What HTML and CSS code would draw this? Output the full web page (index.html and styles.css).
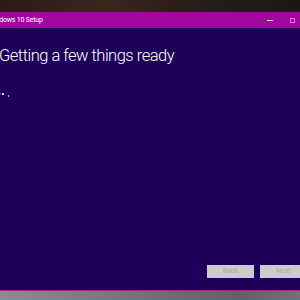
FILE: index.html
```html
<!DOCTYPE html>
<html lang="en">
<head>
	<meta charset="UTF-8">
	<title>Windows 10 Setup</title>
	<link rel="stylesheet" href="styles.css">
</head>
<body>
	<div class="desktop">
		<div class="wallpaper-top"></div>

		<div class="window">
			<div class="titlebar">
				<span class="title">Windows 10 Setup</span>
				<div class="controls">
					<span class="ctrl"><i class="ctrl-min"></i></span>
					<span class="ctrl"><i class="ctrl-max"></i></span>
					<span class="ctrl"><i class="ctrl-close">&#x2715;</i></span>
				</div>
			</div>

			<div class="content">
				<h1 class="heading">Getting a few things ready</h1>
				<svg class="progress-dots" width="12" height="5" viewBox="0 0 12 5">
					<rect x="0" y="0" width="1" height="1" fill="#7a6ab0"/>
					<rect x="2" y="0" width="2" height="2" fill="#d8d0f0"/>
					<rect x="8" y="2" width="1" height="2" fill="#b8b0e0"/>
				</svg>

				<div class="footer">
					<button class="btn" disabled>Back</button>
					<button class="btn" disabled>Next</button>
				</div>
			</div>
		</div>

		<div class="wallpaper-bottom"></div>
	</div>
</body>
</html>
```

FILE: styles.css
```css
* {
	margin: 0;
	padding: 0;
	box-sizing: border-box;
}
html, body {
	width: 300px;
	height: 300px;
	overflow: hidden;
	background: #1e0058;
}
body {
	font-family: Roboto, "Noto Sans", sans-serif;
}

.desktop {
	display: flex;
	flex-direction: column;
	height: 300px;
}

.wallpaper-top {
	height: 12px;
	background: linear-gradient(90deg, #2c1a14 0%, #3a261b 35%, #2a1e18 60%, #1c1714 100%);
}
.wallpaper-bottom {
	flex: 1;
	background: linear-gradient(90deg, #8a8c92 0%, #7a7c84 30%, #6c6e76 55%, #5e6266 80%, #70727a 100%);
}

/* setup window, partly off the left edge of the screen */
.window {
	width: 351px;
	margin-left: -24px;
	display: flex;
	flex-direction: column;
	border-bottom: 1px solid #a0247a;
}

.titlebar {
	height: 16px;
	background: #a2069e;
	display: flex;
	align-items: center;
	color: #fff;
}
.title {
	padding-left: 12px;
	font-size: 7px;
	letter-spacing: -0.2px;
}
.controls {
	margin-left: auto;
	display: flex;
	height: 100%;
}
.ctrl {
	width: 23px;
	height: 16px;
	display: flex;
	align-items: center;
	justify-content: center;
}
.ctrl i {
	display: block;
	font-style: normal;
}
.ctrl-min {
	width: 6px;
	height: 1px;
	background: #f4d8f2;
}
.ctrl-max {
	width: 5px;
	height: 5px;
	border: 1px solid #d080cc;
}
.ctrl-close {
	font-size: 7px;
	color: #fff;
}

.content {
	height: 262px;
	background: #1e0058;
	display: flex;
	flex-direction: column;
	padding: 16px 20px 12px 23px;
}
.heading {
	font-size: 16.5px;
	font-weight: 300;
	letter-spacing: -0.5px;
	line-height: 24px;
	color: #fff;
}
.progress-dots {
	display: block;
	margin-top: 25px;
	margin-left: 1px;
}

.footer {
	margin-top: auto;
	display: flex;
	justify-content: flex-end;
	gap: 6px;
}
.btn {
	width: 47px;
	height: 13px;
	border: none;
	background: #cccccc;
	color: #a8a8a8;
	font-family: Roboto, "Noto Sans", sans-serif;
	font-size: 7px;
	line-height: 13px;
}
```
